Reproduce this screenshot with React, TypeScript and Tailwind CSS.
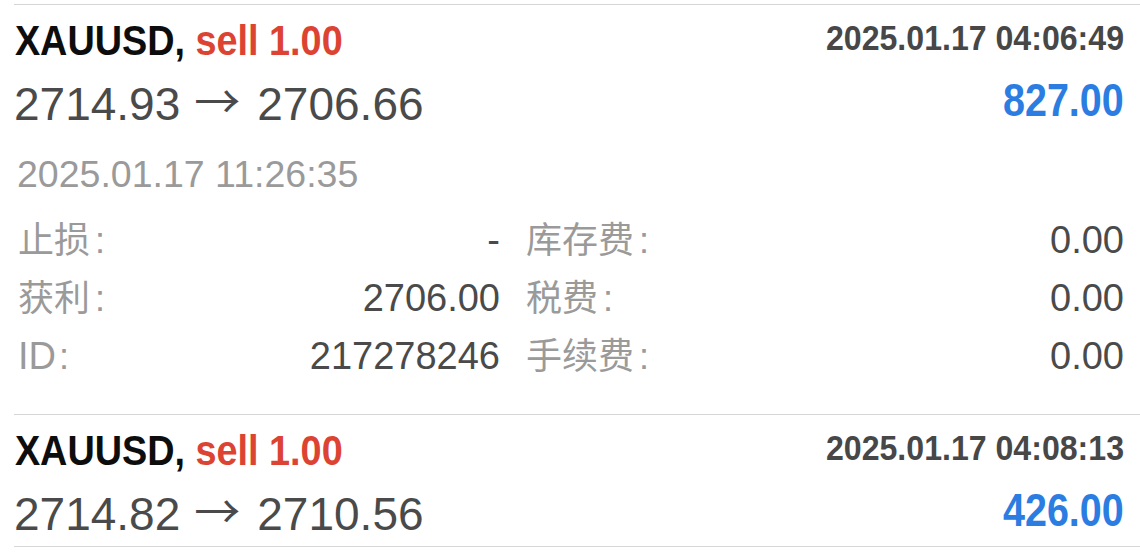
import React from "react";

type Detail = { l1: string; v1: string; l2: string; v2: string };

function Header({ date, from, to, profit }: { date: string; from: string; to: string; profit: string }) {
  return (
    <>
      <div className="flex justify-between items-start h-[70px]">
        <div className="inline-block origin-left scale-x-[0.9] whitespace-nowrap pl-[1px] text-[42px] leading-[71px] font-bold text-[#0d0d0d] font-['Liberation_Sans',Arial,sans-serif]">
          XAUUSD, <span className="text-[#dc4332]">sell 1.00</span>
        </div>
        <div className="inline-block origin-right scale-x-[0.917] whitespace-nowrap text-[35px] leading-[66px] font-bold text-[#474747] font-['Liberation_Sans',Arial,sans-serif]">
          {date}
        </div>
      </div>
      <div className="flex justify-between items-start h-[51px]">
        <div className="flex items-baseline whitespace-nowrap text-[46px] leading-[50px] text-[#4a4a4a] font-['Liberation_Sans',Arial,sans-serif]">
          <span>{from}</span>
          <span className="relative -top-[2px] ml-[14px] mr-[17px] text-[46px] font-['Noto_Sans_CJK_SC',sans-serif]">→</span>
          <span>{to}</span>
        </div>
        <div className="inline-block origin-right scale-x-[0.84] whitespace-nowrap text-[47px] leading-[50px] font-bold text-[#2b7de2] font-['Liberation_Sans',Arial,sans-serif]">
          {profit}
        </div>
      </div>
    </>
  );
}

const details: Detail[] = [
  { l1: "止损", v1: "-", l2: "库存费", v2: "0.00" },
  { l1: "获利", v1: "2706.00", l2: "税费", v2: "0.00" },
  { l1: "ID", v1: "217278246", l2: "手续费", v2: "0.00" },
];

function Label({ text }: { text: string }) {
  const latin = text === "ID";
  return (
    <span className="whitespace-nowrap text-[#9a9a9a] font-['Liberation_Sans','Noto_Sans_CJK_SC',sans-serif]">
      <span className={latin ? "text-[38px]" : "text-[36px]"}>{text}</span>
      <span className={latin ? "text-[36px] ml-[3px]" : "text-[36px] ml-[5px]"}>:</span>
    </span>
  );
}

export default function App() {
  return (
    <div className="w-[1140px] h-[555px] bg-white overflow-hidden pt-[4px]">
      <div className="ml-[14px] border-t border-[#d6d6d6] pr-[16px] pb-[29px]">
        <Header date="2025.01.17 04:06:49" from="2714.93" to="2706.66" profit="827.00" />
        <div className="mt-[25px] pl-[3px] whitespace-nowrap text-[37.5px] leading-[46px] text-[#9a9a9a] font-['Liberation_Sans',Arial,sans-serif]">
          2025.01.17 11:26:35
        </div>
        <div className="mt-[14px]">
          {details.map((d) => (
            <div key={d.l1} className="flex items-baseline h-[58px] leading-[58px]">
              <div className="w-[486px] flex justify-between items-baseline pl-[4px]">
                <Label text={d.l1} />
                <span className="text-[38px] text-[#4a4a4a] font-['Liberation_Sans',Arial,sans-serif]">
                  {d.v1}
                </span>
              </div>
              <div className="ml-[26px] flex-1 flex justify-between items-baseline">
                <Label text={d.l2} />
                <span className="text-[38px] text-[#4a4a4a] font-['Liberation_Sans',Arial,sans-serif]">
                  {d.v2}
                </span>
              </div>
            </div>
          ))}
        </div>
      </div>
      <div className="ml-[14px] border-t border-b border-[#d6d6d6] pr-[16px] pb-[10px]">
        <Header date="2025.01.17 04:08:13" from="2714.82" to="2710.56" profit="426.00" />
      </div>
    </div>
  );
}
